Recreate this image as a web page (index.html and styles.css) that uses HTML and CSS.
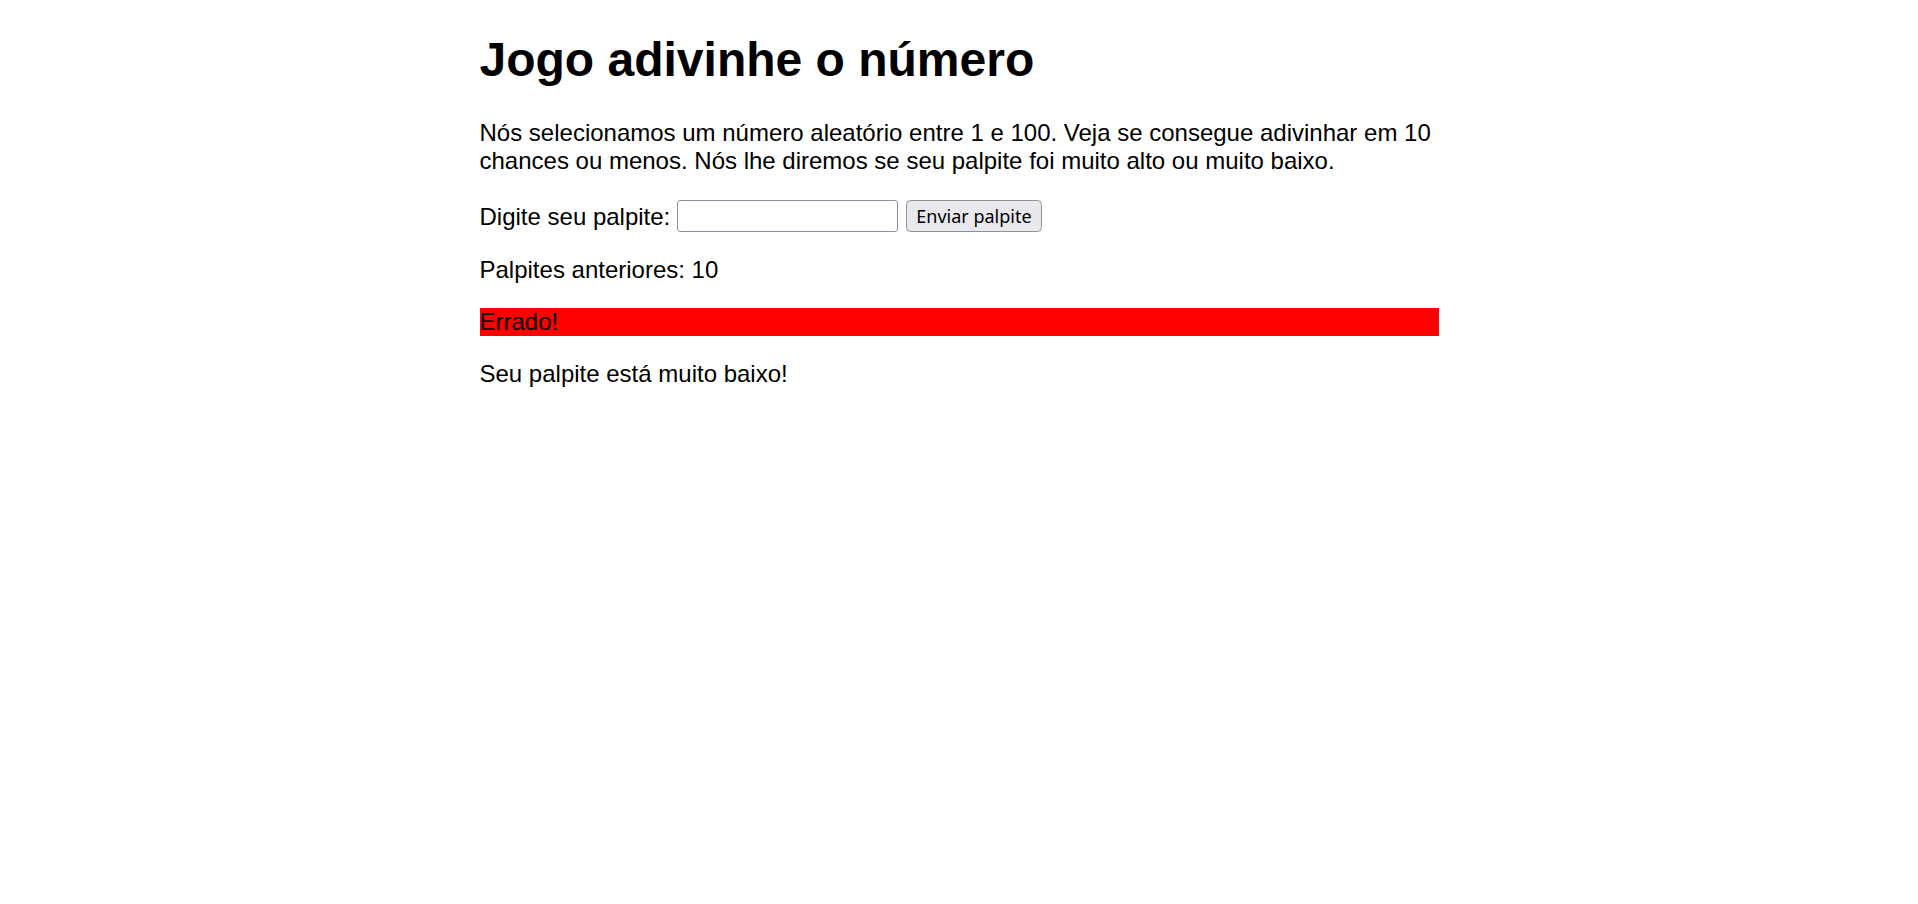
FILE: index.html
```html
<!DOCTYPE html>
<html lang="pt-BR">
<head>
<meta charset="utf-8">
<title>Jogo adivinhe o número</title>
<link rel="stylesheet" href="styles.css">
</head>
<body>
<h1 class="title">Jogo adivinhe o número</h1>
<p class="intro">Nós selecionamos um número aleatório entre 1 e 100. Veja se consegue adivinhar em 10 chances ou menos. Nós lhe diremos se seu palpite foi muito alto ou muito baixo.</p>
<div class="form">
<label for="guessField" class="label">Digite seu palpite: </label><input type="text" id="guessField" class="guess-field"> <input type="submit" value="Enviar palpite" class="guess-submit">
</div>
<div class="result-paras">
<p class="guesses">Palpites anteriores: 10</p>
<p class="last-result">Errado!</p>
<p class="low-or-hi">Seu palpite está muito baixo!</p>
</div>
</body>
</html>
```
FILE: styles.css
```css
html {
  font-family: "Liberation Sans", Arial, sans-serif;
  font-size: 24px;
  color: #000;
  background: #fff;
}

body {
  width: 50%;
  margin: 0 auto;
}

.title {
  font-size: 48px;
  font-weight: bold;
  margin: 32px 0;
}

p {
  margin: 24px 0;
}

.form {
  height: 33px;
  display: flex;
  align-items: flex-start;
  margin: 0;
}

.label {
  line-height: 27.6px;
  padding-top: 4px;
  white-space: pre;
}

.guess-field {
  box-sizing: border-box;
  width: 221px;
  height: 32px;
  margin: 1px 0 0 0;
  padding: 2px 3px;
  border: 1.5px solid #8f8f9d;
  border-radius: 3px;
  background: #fff;
  font-family: "Liberation Sans", Arial, sans-serif;
  font-size: 20px;
}

.guess-submit {
  box-sizing: border-box;
  height: 32px;
  width: 136px;
  margin: 1px 0 0 8px;
  padding: 0 6px;
  border: 1.5px solid #8f8f9d;
  border-radius: 4.5px;
  background: #e9e9ed;
  color: #000;
  font-family: "Noto Sans", "Open Sans", sans-serif;
  font-size: 18px;
  line-height: 1;
}

.last-result {
  background: #ff0000;
  color: #000;
}
```
